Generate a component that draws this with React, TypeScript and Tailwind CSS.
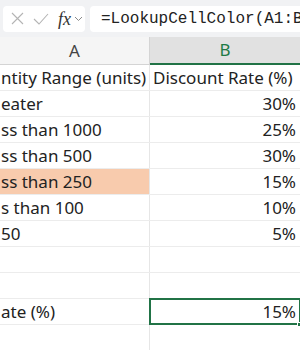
import React from 'react'

const font = { fontFamily: '"Noto Sans", "Liberation Sans", sans-serif' }

type Row = { a: string; b: string; hl?: boolean; sel?: boolean }

const rows: Row[] = [
  { a: 'ntity Range (units)', b: 'Discount Rate (%)' },
  { a: 'eater', b: '30%' },
  { a: 'ss than 1000', b: '25%' },
  { a: 'ss than 500', b: '30%' },
  { a: 'ss than 250', b: '15%', hl: true },
  { a: 's than 100', b: '10%' },
  { a: '50', b: '5%' },
  { a: '', b: '' },
  { a: '', b: '' },
  { a: 'ate (%)', b: '15%', sel: true },
  { a: '', b: '' },
]

export default function App() {
  return (
    <div className="w-[300px] h-[350px] overflow-hidden bg-white text-[#222]" style={font}>
      {/* formula bar */}
      <div className="h-[37px] bg-[#f1f2f4] flex items-center gap-[5px] pl-[3px]">
        <div className="w-[82px] h-[26px] bg-white rounded-[4px] flex items-center pl-[8px] gap-[9px] shrink-0">
          <svg width="13" height="13" viewBox="0 0 13 13" fill="none" stroke="#b4b4b4" strokeWidth="1.1">
            <path d="M1 1l11 11M12 1L1 12" />
          </svg>
          <svg width="16" height="12" viewBox="0 0 16 12" fill="none" stroke="#b4b4b4" strokeWidth="1.1">
            <path d="M1 6l5 5L15 1" />
          </svg>
          <span className="text-[18px] italic text-[#333] leading-none" style={{ fontFamily: '"Liberation Serif", serif' }}>fx</span>
          <svg width="9" height="6" viewBox="0 0 9 6" fill="none" stroke="#8a8a8a" strokeWidth="1" className="-ml-[6px]">
            <path d="M1 1l3.5 3.5L8 1" />
          </svg>
        </div>
        <div className="flex-1 h-[26px] bg-white rounded-l-[4px] flex items-center pl-[11px] overflow-hidden">
          <span className="text-[16px] whitespace-nowrap text-[#222]" style={{ fontFamily: '"Liberation Mono", monospace' }}>=LookupCellColor(A1:B</span>
        </div>
      </div>
      {/* column headers */}
      <div className="flex h-[28px]">
        <div className="w-[149px] bg-[#f5f5f5] border-b border-[#d4d4d4] flex items-center justify-center text-[17px] text-[#444]">A</div>
        <div className="w-px bg-[#d4d4d4]" />
        <div className="flex-1 bg-[#e1e1e1] border-b-2 border-[#217346] flex items-center justify-center text-[17px] text-[#1e7a45]">B</div>
      </div>
      {/* rows */}
      {rows.map((r, i) => (
        <div key={i} className="flex h-[26px] border-b border-[#ececec]">
          <div className={`w-[149px] overflow-hidden whitespace-nowrap flex items-center pl-px text-[17px] ${r.hl ? 'bg-[#f8cbad]' : ''}`}>{r.a}</div>
          <div className="w-px bg-[#e6e6e6]" />
          <div className={`flex-1 flex items-center text-[17px] whitespace-nowrap ${i === 0 ? 'pl-[3px]' : 'justify-end pr-[4px]'} ${r.sel ? 'outline-2 outline-[#217346] -outline-offset-1 relative' : ''}`}>
            {r.b}
            {r.sel && <span className="absolute right-[-2px] bottom-[-3px] w-[5px] h-[5px] bg-[#217346] border border-white" />}
          </div>
        </div>
      ))}
    </div>
  )
}
